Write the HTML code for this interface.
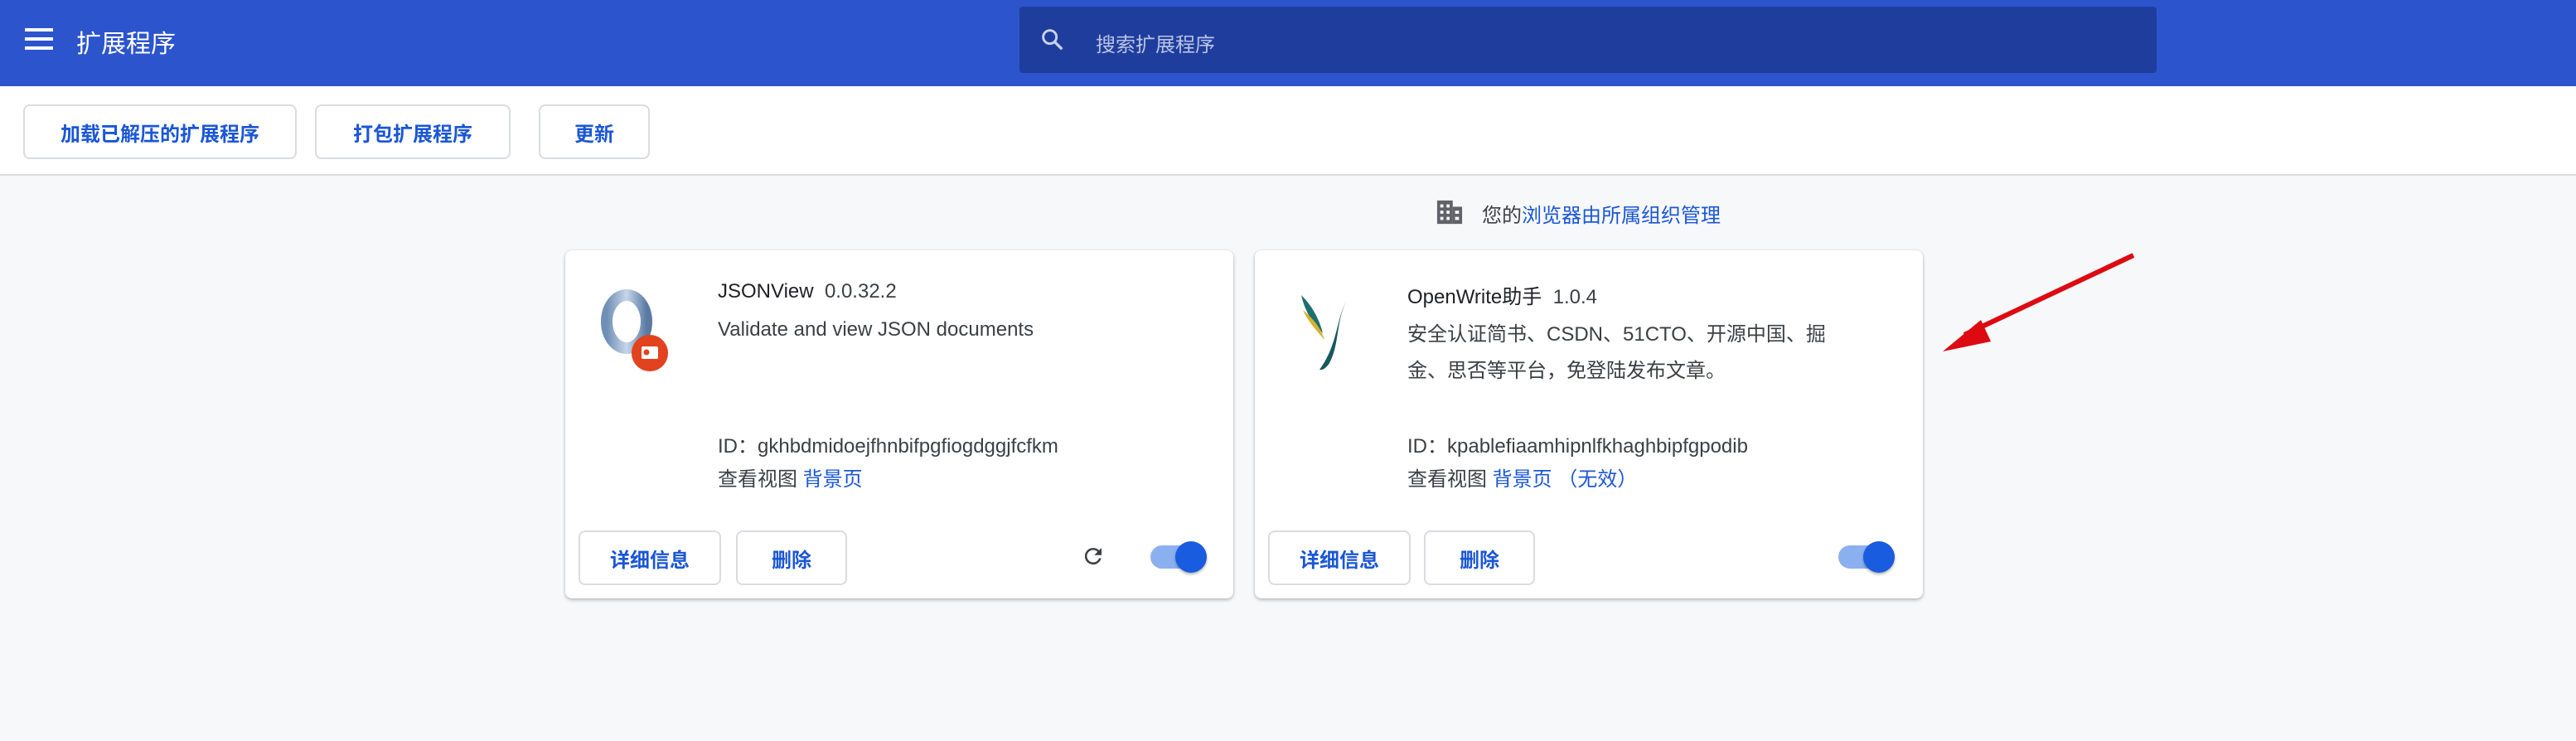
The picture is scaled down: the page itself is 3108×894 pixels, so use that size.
<!DOCTYPE html>
<html><head><meta charset="utf-8"><style>
*{box-sizing:border-box;margin:0;padding:0}
body{width:3108px;height:894px;background:#f7f8fa;font-family:"Liberation Sans","Noto Sans CJK SC",sans-serif;position:relative;overflow:hidden}
.hdr{position:absolute;left:0;top:0;width:3108px;height:104px;background:#2c54cd}
.tb{position:absolute;left:0;top:104px;width:3108px;height:108px;background:#fff;border-bottom:2px solid #dadce0}
.btn{position:absolute;height:66px;border:2px solid #dadce0;border-radius:8px;background:#fff;color:#1a56d6;font-size:24px;font-weight:bold;display:flex;align-items:center;justify-content:center}
.card{position:absolute;top:302px;width:806px;height:420px;background:#fff;border-radius:8px;box-shadow:0 2px 4px rgba(0,0,0,.25),0 0 2px rgba(0,0,0,.1)}
.t{position:absolute;font-size:24px;color:#202124;white-space:nowrap}
.g{color:#3c4043}
.b{color:#1a56d6}
.tg{position:absolute;width:64px;height:28px;border-radius:14px;background:#8ab0f0}
.tg::after{content:"";position:absolute;right:-4px;top:-5px;width:38px;height:38px;border-radius:50%;background:#1a5ce0;box-shadow:0 2px 3px rgba(0,0,0,.3)}
</style></head><body>
<div class="hdr">
 <div style="position:absolute;left:30px;top:34px;width:34px;height:4px;background:#fff;box-shadow:0 11px 0 #fff,0 22px 0 #fff"></div>
 <div style="position:absolute;left:92px;top:28px;font-size:30px;color:#fff">扩展程序</div>
 <div style="position:absolute;left:1230px;top:8px;width:1372px;height:80px;background:#1f3d9c;border-radius:4px">
  <svg style="position:absolute;left:24px;top:24px" width="32" height="32" viewBox="0 0 24 24"><circle cx="9.5" cy="9.5" r="6" fill="none" stroke="#c9d3ee" stroke-width="2.2"/><path d="M14 14l6.5 6.5" stroke="#c9d3ee" stroke-width="2.5"/></svg>
  <div style="position:absolute;left:92px;top:26px;font-size:24px;color:#b8c4e6">搜索扩展程序</div>
 </div>
</div>
<div class="tb">
 <div class="btn" style="left:28px;top:22px;width:330px">加载已解压的扩展程序</div>
 <div class="btn" style="left:380px;top:22px;width:236px">打包扩展程序</div>
 <div class="btn" style="left:650px;top:22px;width:134px">更新</div>
</div>
<svg style="position:absolute;left:1732px;top:240px" width="34" height="32" viewBox="0 0 36 34"><rect x="2" y="2" width="20" height="30" fill="#5f6368"/><rect x="22" y="10" width="12" height="22" fill="#5f6368"/><g fill="#f7f8fa"><rect x="6" y="7" width="4" height="4"/><rect x="14" y="7" width="4" height="4"/><rect x="6" y="15" width="4" height="4"/><rect x="14" y="15" width="4" height="4"/><rect x="6" y="23" width="4" height="4"/><rect x="14" y="23" width="4" height="4"/><rect x="25" y="15" width="5" height="4"/><rect x="25" y="23" width="5" height="4"/></g></svg>
<div class="t g" style="left:1788px;top:240px">您的<span class="b">浏览器由所属组织管理</span></div>

<div class="card" style="left:682px">
 <svg style="position:absolute;left:42px;top:44px" width="100" height="104" viewBox="0 0 100 104"><defs><linearGradient id="r" x1="0" x2="1"><stop offset="0" stop-color="#6f8fb5"/><stop offset=".5" stop-color="#c7d6e8"/><stop offset="1" stop-color="#5a7aa3"/></linearGradient></defs><ellipse cx="32" cy="42" rx="24" ry="32" fill="none" stroke="url(#r)" stroke-width="14"/><circle cx="60" cy="80" r="22" fill="#e2421e"/><rect x="50" y="72" width="20" height="15" rx="2" fill="#fff"/><circle cx="56" cy="79" r="3.5" fill="#e2421e"/></svg>
 <div class="t" style="left:184px;top:36px">JSONView&nbsp;&nbsp;<span class="g">0.0.32.2</span></div>
 <div class="t g" style="left:184px;top:82px">Validate and view JSON documents</div>
 <div class="t g" style="left:184px;top:216px">ID：gkhbdmidoejfhnbifpgfiogdggjfcfkm</div>
 <div class="t g" style="left:184px;top:256px">查看视图 <span class="b">背景页</span></div>
 <div class="btn" style="left:16px;top:338px;width:172px">详细信息</div>
 <div class="btn" style="left:206px;top:338px;width:134px">删除</div>
 <svg style="position:absolute;left:622px;top:354px" width="30" height="30" viewBox="0 0 24 24"><path d="M17.6 6.4A8 8 0 1 0 19.7 14h-2.1a6 6 0 1 1-1.4-6.2L13 11h7V4z" fill="#3c4043"/></svg>
 <div class="tg" style="left:706px;top:356px"></div>
</div>

<div class="card" style="left:1514px">
 <svg style="position:absolute;left:52px;top:50px" width="64" height="100" viewBox="0 0 64 100"><path d="M4 4C8 22 16 36 30 50C26 34 18 18 4 4Z" fill="#1d6f72"/><path d="M6 22C12 36 22 46 32 58C28 44 18 32 6 22Z" fill="#d9b22d"/><path d="M58 12C46 34 48 64 26 94C30 95 34 92 38 86C50 64 46 36 58 12Z" fill="#17595c"/></svg>
 <div class="t" style="left:184px;top:36px">OpenWrite助手&nbsp;&nbsp;<span class="g">1.0.4</span></div>
 <div class="t g" style="left:184px;top:80px;line-height:44px">安全认证简书、CSDN、51CTO、开源中国、掘<br>金、思否等平台，免登陆发布文章。</div>
 <div class="t g" style="left:184px;top:216px">ID：kpablefiaamhipnlfkhaghbipfgpodib</div>
 <div class="t g" style="left:184px;top:256px">查看视图 <span class="b">背景页 （无效）</span></div>
 <div class="btn" style="left:16px;top:338px;width:172px">详细信息</div>
 <div class="btn" style="left:204px;top:338px;width:134px">删除</div>
 <div class="tg" style="left:704px;top:356px"></div>
</div>

<svg style="position:absolute;left:2330px;top:300px" width="260" height="130" viewBox="0 0 260 130"><path d="M244 8L40 104" stroke="#dd0a12" stroke-width="6"/><path d="M14 124L60 86L72 112Z" fill="#dd0a12"/></svg>
</body></html>
